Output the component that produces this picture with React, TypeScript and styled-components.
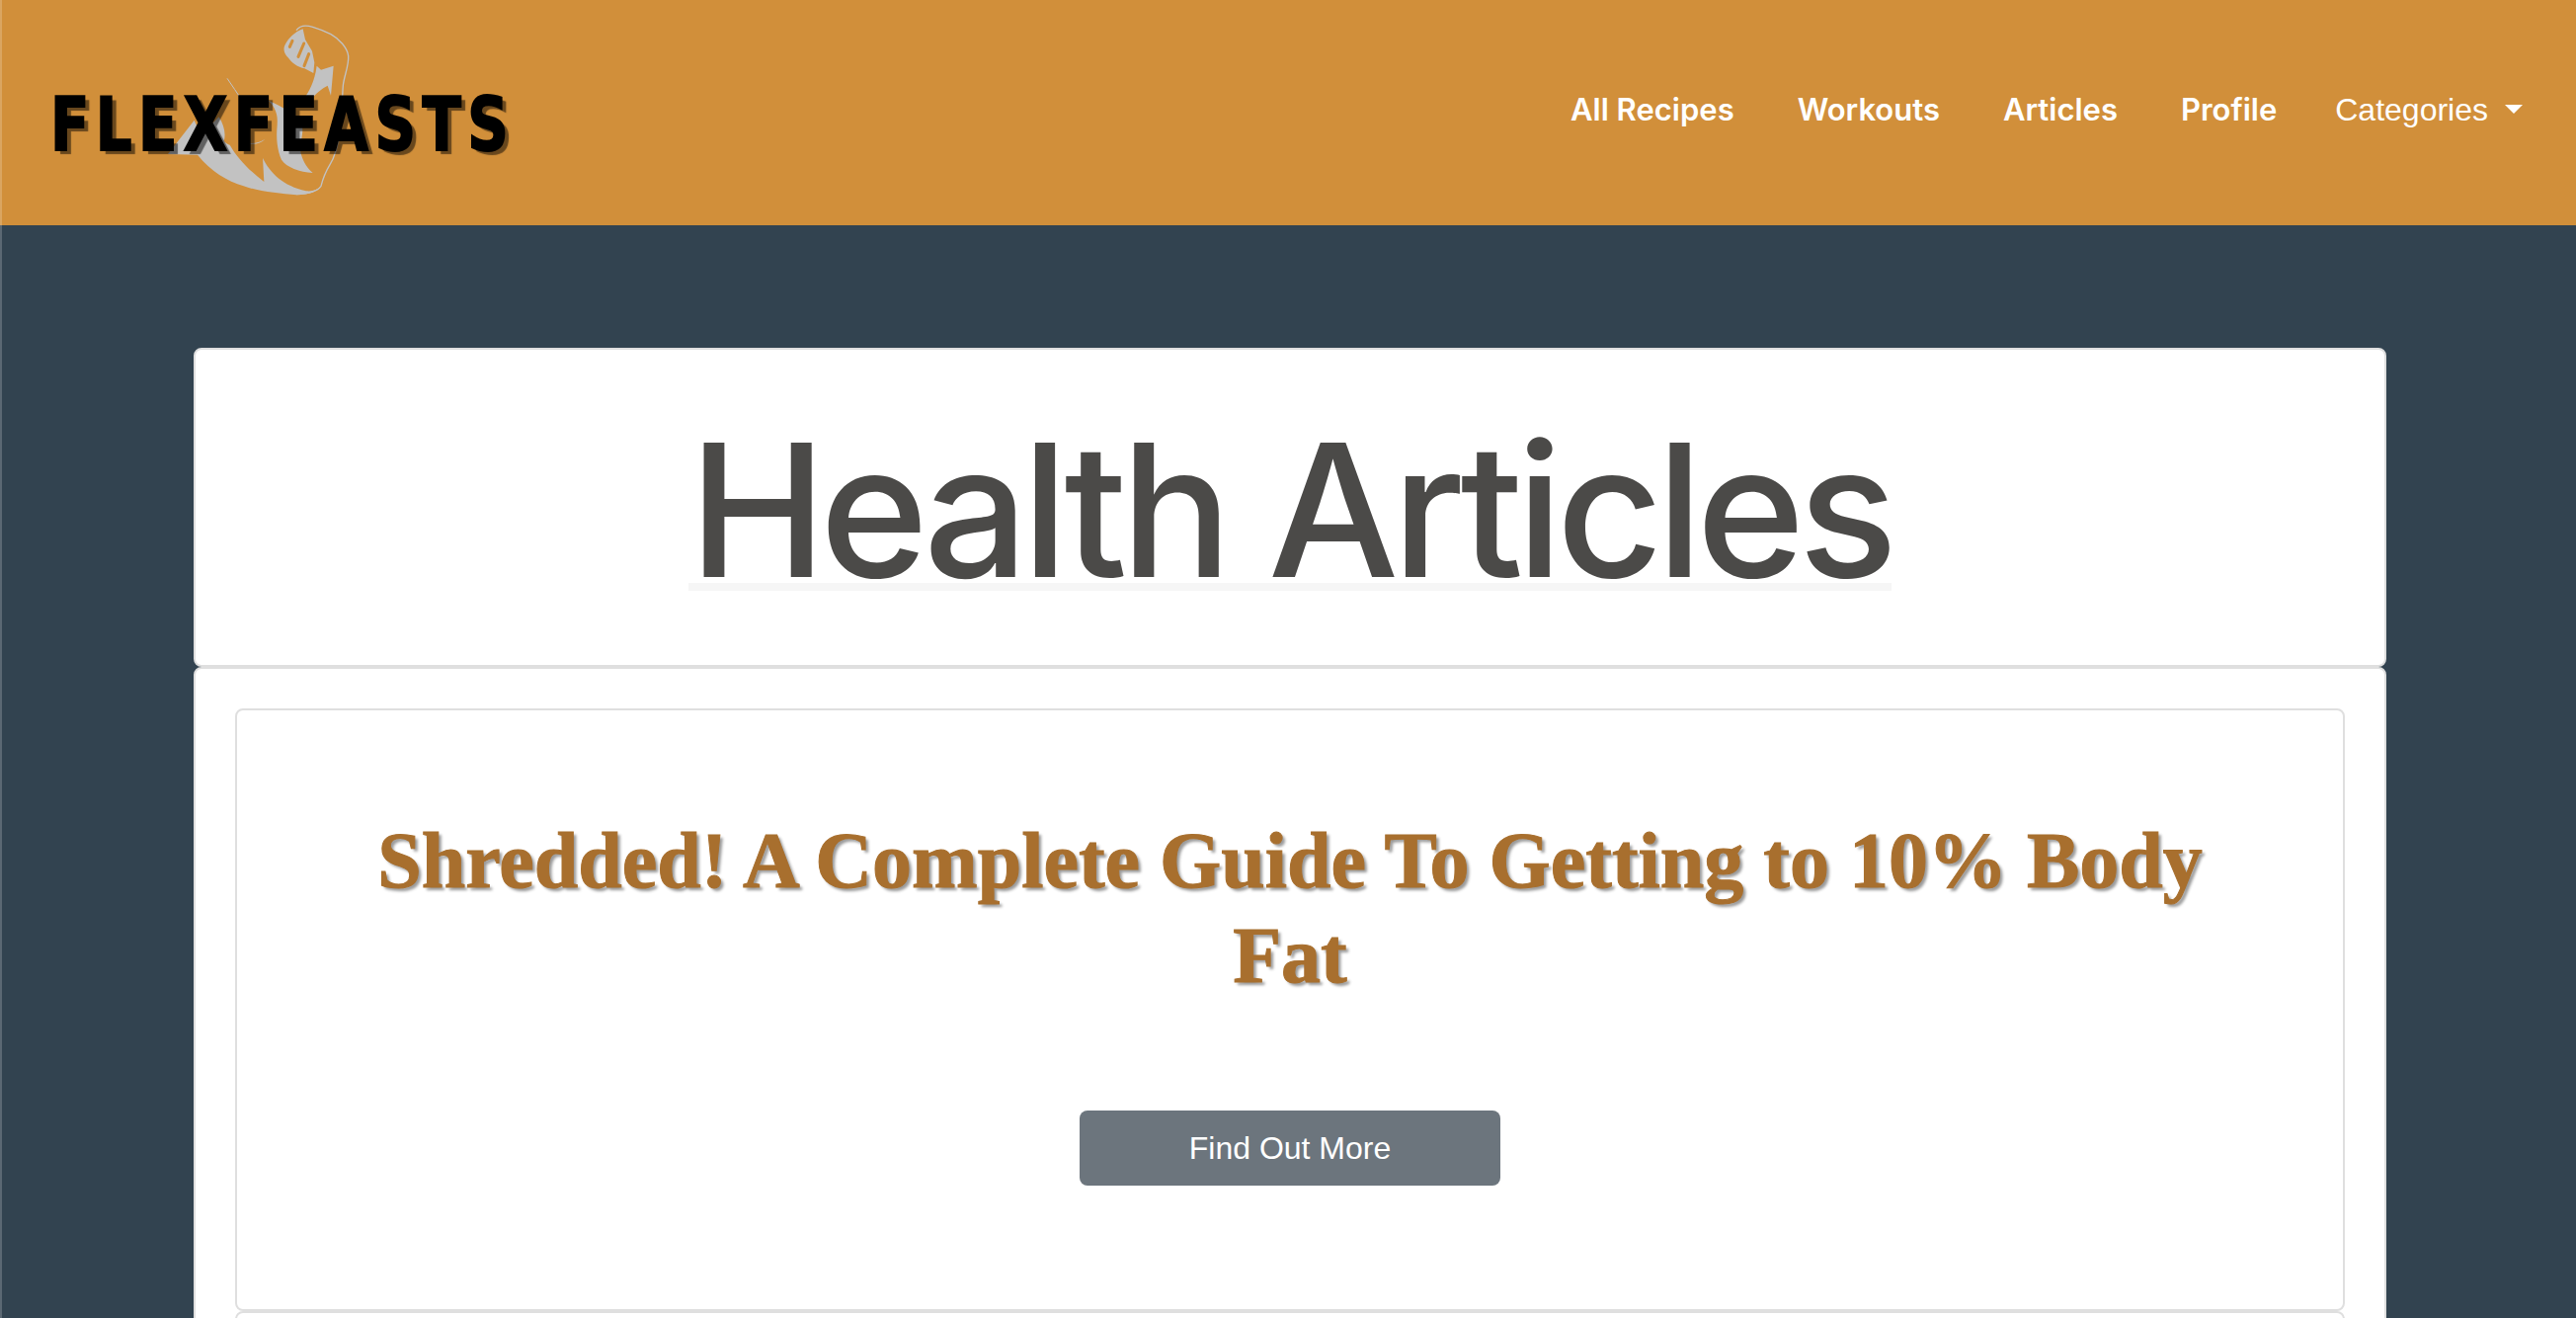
import { FC } from "react";
import styled, { createGlobalStyle } from "styled-components";

const GlobalStyle = createGlobalStyle`
  html, body {
    margin: 0;
    padding: 0;
    height: 100%;
    overflow: hidden;
    background-color: #324350;
    font-family: "Liberation Sans", Arial, sans-serif;
  }
`;

const Page = styled.div`
  position: relative;
  height: 1334px;
  overflow: hidden;

  &::after {
    content: "";
    position: absolute;
    top: 0;
    bottom: 0;
    left: 0;
    width: 2px;
    background: rgba(255, 255, 255, 0.2);
  }
`;

const Header = styled.header`
  height: 228px;
  background-color: #d18f3a;
  display: flex;
  align-items: flex-start;
  justify-content: space-between;
`;

const Brand = styled.a`
  position: relative;
  margin: 90px 0 0 51px;
  color: #000;
`;

const BrandName = styled.span`
  position: relative;
  display: inline-block;
  font-family: "DejaVu Sans", sans-serif;
  font-weight: 700;
  font-size: 74px;
  line-height: 72px;
  letter-spacing: 8.2px;
  -webkit-text-stroke: 2px #000;
  text-shadow: 6px 4px 1px rgba(0, 0, 0, 0.5);
  transform: scaleX(0.78);
  transform-origin: left center;
`;

const Arm = styled.svg`
  position: absolute;
  left: 109px;
  top: -70px;
  width: 200px;
  height: 185px;
`;

const Nav = styled.nav`
  display: flex;
  align-items: baseline;
  margin: 88px 54px 0 0;
`;

const NavLink = styled.a`
  margin-left: 64px;
  color: #fff;
  font-family: Inter, "Liberation Sans", sans-serif;
  font-size: 31px;
  line-height: 40px;
  font-weight: 600;
`;

const Dropdown = styled.a`
  display: flex;
  align-items: center;
  margin-left: 59px;
  padding-top: 2px;
  color: #fff;
  font-size: 32px;
  line-height: 42px;
  font-weight: 400;

  &::after {
    content: "";
    margin: -2px 0 0 17px;
    border-top: 9px solid #fff;
    border-left: 9px solid transparent;
    border-right: 9px solid transparent;
  }
`;

const Main = styled.main`
  padding: 124px 192px 0 196px;
`;

const Card = styled.section`
  background: #fff;
  border: 2px solid #dfdfdf;
  border-radius: 8px;
`;

const TitleCard = styled(Card)`
  height: 323px;
  box-sizing: border-box;
  display: flex;
  justify-content: center;
`;

const Title = styled.h1`
  margin: 76px 0 0;
  height: 160px;
  font-family: Inter, "Liberation Sans", sans-serif;
  font-size: 187px;
  line-height: 172px;
  letter-spacing: -6.7px;
  font-weight: 500;
  color: #4b4a48;
  border-bottom: 8px solid #f6f6f6;
`;

const ListCard = styled(Card)`
  padding: 40px;
`;

const Article = styled.article`
  background: #fff;
  border: 2px solid #dfdfdf;
  border-radius: 8px;
  height: 610px;
  box-sizing: border-box;
  padding: 104px 100px 0;
  display: flex;
  flex-direction: column;
  align-items: center;
`;

const ArticleTitle = styled.h2`
  margin: 0;
  font-family: "Liberation Serif", "Times New Roman", serif;
  font-size: 80px;
  line-height: 96px;
  font-weight: 700;
  text-align: center;
  color: #a86f2e;
  -webkit-text-stroke: 1px #a86f2e;
  text-shadow: 3px 3px 3px #9a9a9a;
`;

const MoreButton = styled.button`
  margin-top: 109px;
  width: 426px;
  height: 76px;
  flex-shrink: 0;
  border: none;
  border-radius: 8px;
  background: #6c757d;
  color: #fff;
  font-family: "Liberation Sans", Arial, sans-serif;
  font-size: 32px;
`;

const NextArticle = styled(Article)`
  margin-top: 0;
`;

const articles = ["Shredded! A Complete Guide To Getting to 10% Body Fat"];

const ArmMark: FC = () => (
  <Arm viewBox="0 0 600 555" fill="#c2c2c2">
    <path
      d="M420 32 C430 18 445 14 470 22 C490 28 510 36 525 44 C550 58 575 85 578 110 C580 140 565 170 562 200 C558 250 560 300 550 350 C545 385 535 420 522 440 C510 460 500 485 495 505 C485 520 460 528 420 530"
      fill="none"
      stroke="#c2c2c2"
      strokeWidth="4"
    />
    <path d="M440 28 L447 60 L468 95 L475 130 L472 162 L445 148 C425 145 405 130 395 115 C385 105 378 90 386 76 C395 58 415 36 440 28 Z" />
    <path
      d="M408 64 L400 82 M443 72 L426 112 M458 104 L444 140"
      stroke="#d18f3a"
      strokeWidth="9"
      strokeLinecap="round"
    />
    <path d="M482 140 L495 152 L533 140 L525 230 L515 200 C498 208 478 225 462 245 L440 245 C460 215 475 190 482 140 Z" />
    <path d="M210 178 C225 200 240 222 256 246" fill="none" stroke="#c2c2c2" strokeWidth="3" />
    <path d="M30 408 L110 305 L130 350 L185 295 C200 320 207 345 200 368 C208 376 212 378 218 380 C240 420 280 460 322 492 L318 420 C340 465 380 505 450 520 C470 522 485 516 495 505 C485 520 460 532 420 532 C370 528 300 520 260 505 C210 490 160 460 120 410 Z" />
    <path d="M265 372 C285 378 305 375 325 362 C310 378 285 382 265 372 Z" />
    <path d="M335 245 C355 265 365 285 362 320 C358 360 362 395 375 425 C390 448 430 462 470 465 C450 448 435 420 432 395 C432 370 442 345 438 325 C425 290 380 265 335 245 Z" />
  </Arm>
);

export default function App() {
  return (
    <Page>
      <GlobalStyle />
      <Header>
        <Brand>
          <ArmMark />
          <BrandName>FLEXFEASTS</BrandName>
        </Brand>
        <Nav>
          <NavLink>All Recipes</NavLink>
          <NavLink>Workouts</NavLink>
          <NavLink>Articles</NavLink>
          <NavLink>Profile</NavLink>
          <Dropdown>Categories</Dropdown>
        </Nav>
      </Header>
      <Main>
        <TitleCard>
          <Title>Health Articles</Title>
        </TitleCard>
        <ListCard>
          {articles.map((title) => (
            <Article key={title}>
              <ArticleTitle>{title}</ArticleTitle>
              <MoreButton type="button">Find Out More</MoreButton>
            </Article>
          ))}
          <NextArticle />
        </ListCard>
      </Main>
    </Page>
  );
}
